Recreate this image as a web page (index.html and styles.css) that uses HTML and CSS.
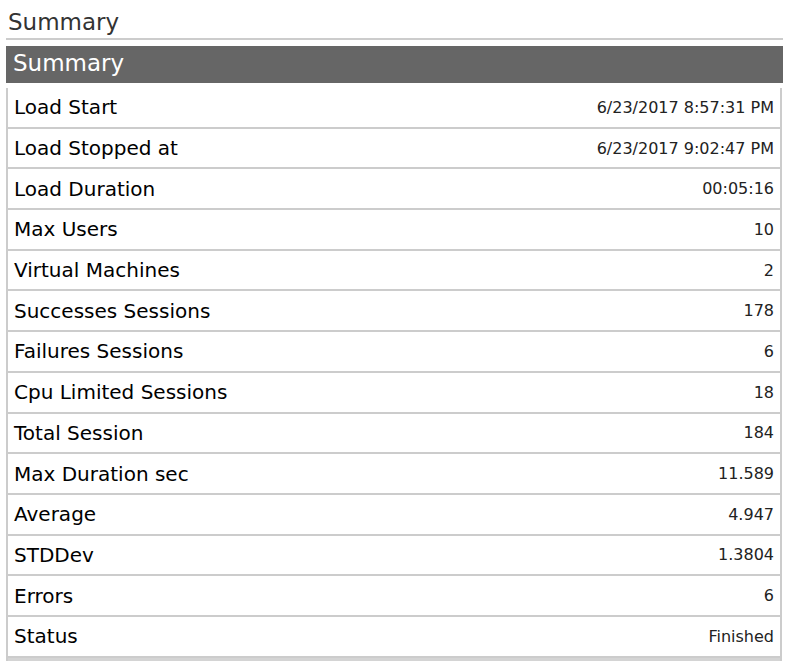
FILE: index.html
```html
<!DOCTYPE html>
<html>
<head>
<meta charset="utf-8">
<link rel="stylesheet" href="styles.css">
</head>
<body>
<div class="page">
  <h1 class="page-title">Summary</h1>
  <h2 class="panel-head">Summary</h2>
  <div class="summary">
    <div class="row"><span class="label">Load Start</span><span class="value">6/23/2017 8:57:31 PM</span></div>
    <div class="row"><span class="label">Load Stopped at</span><span class="value">6/23/2017 9:02:47 PM</span></div>
    <div class="row"><span class="label">Load Duration</span><span class="value">00:05:16</span></div>
    <div class="row"><span class="label">Max Users</span><span class="value">10</span></div>
    <div class="row"><span class="label">Virtual Machines</span><span class="value">2</span></div>
    <div class="row"><span class="label">Successes Sessions</span><span class="value">178</span></div>
    <div class="row"><span class="label">Failures Sessions</span><span class="value">6</span></div>
    <div class="row"><span class="label">Cpu Limited Sessions</span><span class="value">18</span></div>
    <div class="row"><span class="label">Total Session</span><span class="value">184</span></div>
    <div class="row"><span class="label">Max Duration sec</span><span class="value">11.589</span></div>
    <div class="row"><span class="label">Average</span><span class="value">4.947</span></div>
    <div class="row"><span class="label">STDDev</span><span class="value">1.3804</span></div>
    <div class="row"><span class="label">Errors</span><span class="value">6</span></div>
    <div class="row"><span class="label">Status</span><span class="value">Finished</span></div>
    <div class="summary-foot"></div>
  </div>
</div>
</body>
</html>
```
FILE: styles.css
```css
html, body {
  margin: 0;
  padding: 0;
  background: #ffffff;
}
body {
  font-family: "DejaVu Sans", Verdana, sans-serif;
}
.page {
  padding: 9px 5px 0 6px;
}
.page-title {
  margin: 0;
  padding: 0 0 2px 2px;
  font-size: 23px;
  font-weight: normal;
  line-height: 27px;
  color: #333333;
  border-bottom: 2px solid #cccccc;
}
.panel-head {
  margin: 6px 0 0 0;
  padding: 4px 7px 6px 7px;
  font-size: 23px;
  font-weight: normal;
  line-height: 27px;
  color: #ffffff;
  background: #666666;
}
.summary {
  margin: 5px 1px 0 0;
  border-left: 2px solid #cccccc;
  border-right: 2px solid #cccccc;
}
.row {
  display: flex;
  align-items: center;
  justify-content: space-between;
  height: 38.7px;
  padding: 0 6px;
  border-bottom: 2px solid #cccccc;
}
.label {
  font-size: 20px;
  color: #000000;
}
.value {
  font-size: 16px;
  color: #222222;
}
.summary-foot {
  height: 12px;
  background: #d4d4d4;
}
```
